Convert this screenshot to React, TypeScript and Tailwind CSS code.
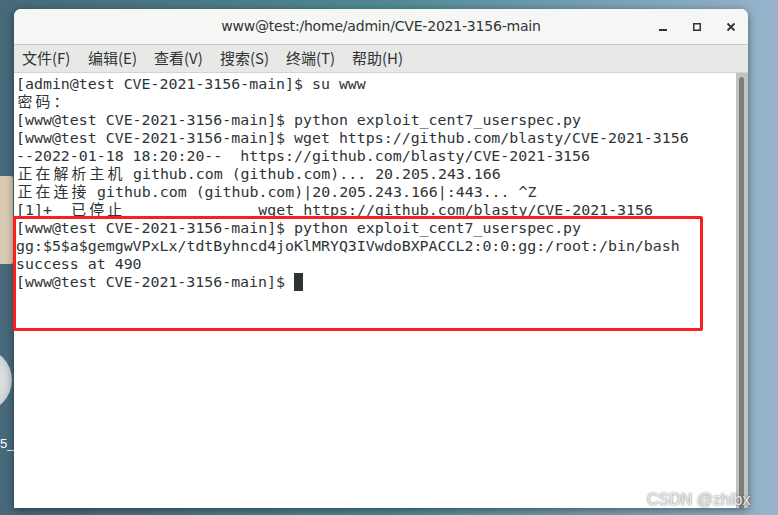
import React from 'react';

const lines: string[] = [
  '[admin@test CVE-2021-3156-main]$ su www',
  '密码：',
  '[www@test CVE-2021-3156-main]$ python exploit_cent7_userspec.py',
  '[www@test CVE-2021-3156-main]$ wget https://github.com/blasty/CVE-2021-3156',
  '--2022-01-18 18:20:20--  https://github.com/blasty/CVE-2021-3156',
  '正在解析主机 github.com (github.com)... 20.205.243.166',
  '正在连接 github.com (github.com)|20.205.243.166|:443... ^Z',
  '[1]+  已停止               wget https://github.com/blasty/CVE-2021-3156',
  '[www@test CVE-2021-3156-main]$ python exploit_cent7_userspec.py',
  'gg:$5$a$gemgwVPxLx/tdtByhncd4joKlMRYQ3IVwdoBXPACCL2:0:0:gg:/root:/bin/bash',
  'success at 490',
];

const menus = ['文件(F)', '编辑(E)', '查看(V)', '搜索(S)', '终端(T)', '帮助(H)'];

// CJK glyphs take two terminal cells
function TermLine({ text }: { text: string }) {
  return (
    <div className="h-[18px] leading-[18px] whitespace-pre">
      {Array.from(text).map((ch, i) =>
        ch.charCodeAt(0) > 0x2e80 ? (
          <span key={i} className="inline-block w-[18px] text-center">{ch}</span>
        ) : (
          <React.Fragment key={i}>{ch}</React.Fragment>
        )
      )}
    </div>
  );
}

export default function App() {
  return (
    <div className="relative w-[778px] h-[515px] overflow-hidden bg-linear-to-r from-[#47697b] via-[#4f8a95] to-[#97b4cc]">
      {/* desktop icons peeking out on the left */}
      <div className="absolute left-0 top-[176px] w-[13px] h-[88px] bg-[#d8cbb2] rounded-r-[2px]" />
      <div className="absolute left-[-52px] top-[348px] w-[64px] h-[64px] rounded-full bg-[radial-gradient(circle,#f2f2f4_0%,#d5d7dc_60%,#a9adb5_100%)]" />
      <div className="absolute left-0 top-[434px] text-[13px] text-white font-['Liberation_Sans',sans-serif]">5_(</div>

      {/* terminal window */}
      <div className="absolute left-[14px] top-[9px] w-[734px] h-[499px] flex flex-col bg-white rounded-t-[7px] shadow-[0_2px_8px_rgba(0,0,0,0.45)] overflow-hidden">
        {/* title bar */}
        <div className="relative h-[36px] shrink-0 bg-[#f6f6f5] border-b border-[#c9c9c6] flex items-center justify-center">
          <span className="text-[14px] text-[#2e3436] font-['DejaVu_Sans',sans-serif] tracking-[-0.2px]">
            www@test:/home/admin/CVE-2021-3156-main
          </span>
          <div className="absolute right-[12px] top-0 h-full flex items-center gap-[24px] text-[#2e3436]">
            <svg width="10" height="10" viewBox="0 0 10 10">
              <rect x="1" y="7" width="8" height="2" fill="#2e3436" />
            </svg>
            <svg width="10" height="10" viewBox="0 0 10 10">
              <rect x="1.75" y="1.75" width="6.5" height="6.5" fill="none" stroke="#2e3436" strokeWidth="1.5" />
            </svg>
            <svg width="10" height="10" viewBox="0 0 10 10">
              <path d="M1.5 1.5 L8.5 8.5 M8.5 1.5 L1.5 8.5" stroke="#2e3436" strokeWidth="1.8" />
            </svg>
          </div>
        </div>

        {/* menu bar */}
        <div className="h-[28px] shrink-0 bg-[#e8e8e7] border-b border-[#d3d3d0] flex items-center pl-[8px] gap-[16px] text-[15px] text-[#2e3436] font-['Noto_Sans_CJK_SC','Noto_Sans',sans-serif]">
          {menus.map((m) => (
            <span key={m} className="w-[50px] whitespace-nowrap">{m}</span>
          ))}
        </div>

        {/* terminal body */}
        <div className="flex-1 flex min-h-0">
          <div className="flex-1 pt-[2px] pl-[2px] text-[14.9px] text-[#2e3436] font-['DejaVu_Sans_Mono','Noto_Sans_CJK_SC',monospace]">
            {lines.map((l, i) => (
              <TermLine key={i} text={l} />
            ))}
            <div className="h-[18px] leading-[18px] whitespace-pre flex items-center">
              <span>[www@test CVE-2021-3156-main]$ </span>
              <span className="inline-block w-[9px] h-[18px] bg-[#2e3436]" />
            </div>
          </div>
          <div className="w-[12px] shrink-0 bg-[#c2c3c1] pt-[4px] pl-[3px]">
            <div className="w-[5px] h-full bg-[#7c7d7c] rounded-t-full" />
          </div>
        </div>
      </div>

      {/* red highlight box */}
      <div className="absolute left-[13px] top-[216px] w-[690px] h-[115px] border-[3px] border-[#fa1e1e] rounded-[2px]" />

      {/* watermark */}
      <div className="absolute left-[647px] top-[488px] text-[16px] text-[#e9eaec] font-['Liberation_Sans',sans-serif] [text-shadow:0_0_2px_rgba(60,60,60,0.8)]">
        CSDN @zhibx
      </div>
    </div>
  );
}
